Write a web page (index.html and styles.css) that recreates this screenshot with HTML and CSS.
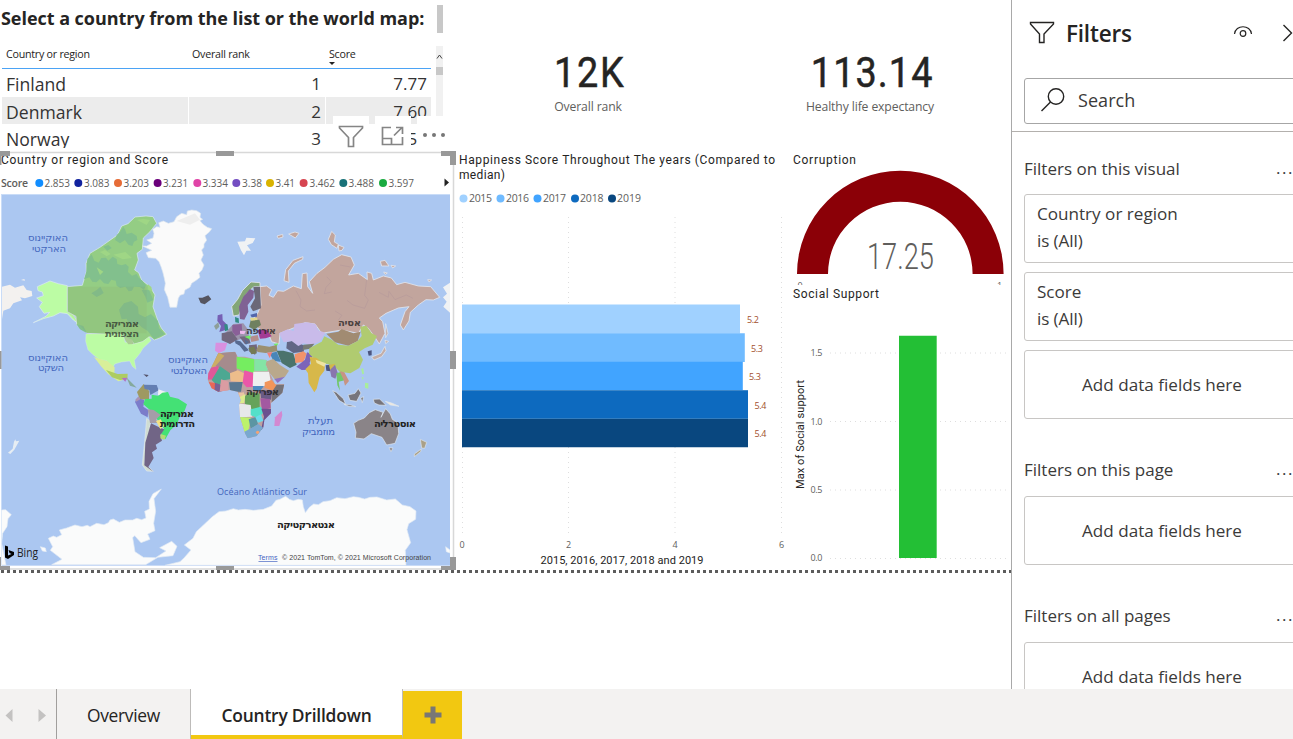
FILE: index.html
```html
<!DOCTYPE html>
<html lang="en">
<head>
<meta charset="utf-8">
<title>Country Drilldown</title>
<link rel="stylesheet" href="styles.css">
</head>
<body>
<div class="app">
<div class="workspace">
<main class="report">
  <section class="picker">
    <div class="picker-head"><h1>Select a country from the list or the world map:</h1><i class="head-thumb"></i></div>
    <div class="table-wrap">
      <div class="table">
        <div class="tr th"><span>Country or region</span><span>Overall rank</span><span class="sorted">Score</span></div>
        <div class="tr"><span>Finland</span><span>1</span><span>7.77</span></div>
        <div class="tr alt"><span>Denmark</span><span>2</span><span>7.60</span></div>
        <div class="tr"><span>Norway</span><span>3</span><span>7.55</span></div>
      </div>
      <div class="scroll"><svg width="7" height="21" viewBox="0 0 7 21"><path d="M1 12.5 3.5 9 6 12.5" fill="none" stroke="#444" stroke-width="1"/></svg><i></i></div>
    </div>
    <div class="visual-tools">
      <span><svg width="26" height="24" viewBox="0 0 26 24"><path d="M1.500 1.500H24.500V3L15.500 12.500V21.500H10.500V12.500L1.500 3Z"/></svg></span>
      <span><svg width="24" height="24" viewBox="0 0 24 24"><path d="M10 2.500H1.500V19.500H21.500V12M1.500 13.500H10.500V19.500M13 10.500 21 2.500M15 2.500H21.500V9"/></svg></span>
      <span><svg width="28" height="24" viewBox="0 0 28 24"><g class="dots"><circle cx="4" cy="10" r="2"/><circle cx="13" cy="10" r="2"/><circle cx="22" cy="10" r="2"/></g></svg></span>
    </div>
  </section>

  <section class="card"><b class="v1">12K</b><span>Overall rank</span></section>
  <section class="card card-b"><b class="v2">113.14</b><span>Healthy life expectancy</span></section>

  <section class="map">
  <svg width="456" height="420" viewBox="0 150 456 420">
    <path d="M0 152.500H453.500V569M0 569H455" stroke="#d8d8d8" fill="none" stroke-width="1.500"/>
    <text class="din" x="1" y="164" textLength="167">Country or region and Score</text>
    <text class="leg bold" x="1" y="187" textLength="27">Score</text>
    <g class="leg">
      <circle cx="39.300" cy="183" r="4" fill="#118dff"/><text x="44.500" y="187" textLength="25.500" lengthAdjust="spacingAndGlyphs">2.853</text>
      <circle cx="78.300" cy="183" r="4" fill="#12239e"/><text x="84" y="187" textLength="25.500" lengthAdjust="spacingAndGlyphs">3.083</text>
      <circle cx="118" cy="183" r="4" fill="#e66c37"/><text x="123.500" y="187" textLength="25.500" lengthAdjust="spacingAndGlyphs">3.203</text>
      <circle cx="157.600" cy="183" r="4" fill="#6b007b"/><text x="163" y="187" textLength="25" lengthAdjust="spacingAndGlyphs">3.231</text>
      <circle cx="197.300" cy="183" r="4" fill="#e044a7"/><text x="202.500" y="187" textLength="25.500" lengthAdjust="spacingAndGlyphs">3.334</text>
      <circle cx="236.300" cy="183" r="4" fill="#744ec2"/><text x="242" y="187" textLength="20" lengthAdjust="spacingAndGlyphs">3.38</text>
      <circle cx="270" cy="183" r="4" fill="#d9b300"/><text x="275.500" y="187" textLength="19.500" lengthAdjust="spacingAndGlyphs">3.41</text>
      <circle cx="303.600" cy="183" r="4" fill="#d64550"/><text x="309.500" y="187" textLength="25.500" lengthAdjust="spacingAndGlyphs">3.462</text>
      <circle cx="343.300" cy="183" r="4" fill="#197278"/><text x="348.500" y="187" textLength="25.500" lengthAdjust="spacingAndGlyphs">3.488</text>
      <circle cx="383" cy="183" r="4" fill="#1aab40"/><text x="388.500" y="187" textLength="25.500" lengthAdjust="spacingAndGlyphs">3.597</text>
    </g>
    <path d="M444.500 178.500 449 182.500 444.500 186.500Z" fill="#222"/>
    <clipPath id="frame"><rect x="1.500" y="195" width="448.500" height="370.500"/></clipPath>
    <clipPath id="africa"><path d="M-20 490 30 485 38 500 60 500 88 507 125 510 122 525 140 560 150 583 178 582 172 608 138 640 138 670 118 690 115 712 95 738 68 745 60 730 45 680 42 645 48 630 38 605 15 600 -20 605 -40 595 -52 570 -50 550 -35 520Z"/></clipPath>
    <rect x="1" y="194" width="449" height="371.500" fill="#c9dcf7"/>
    <g clip-path="url(#frame)">
    <rect x="2" y="195" width="448" height="371" fill="#abc7f1"/>
    <g transform="translate(0 190) scale(.33333)" stroke-linejoin="round">
      <path fill="#f3f1ef" d="M6 290 30 284 45 293 70 286 80 300 95 303 97 318 75 325 60 322 66 331 40 340 30 355 10 362 6 388ZM63 270 73 267 75 272Z"/>
      <g stroke="#dceaf5" stroke-width="2">
      <path fill="#bcfca4" d="M112 290 150 273 175 281 202 287V361L218 372 238 403 220 390 202 371 180 368 160 378 130 386 100 398 138 379 149 367 132 370 118 350 127 337 110 324 130 317 127 306 114 302Z"/>
      <path fill="#94cd84" d="M202 290 247 286 259 245 258 220 270 190 300 172 352 135 365 108 384 101 405 81 438 78 459 80 470 100 450 125 430 144 427 178 411 190 415 210 404 240 416 248 425 270 450 290 465 315 459 350 474 393 484 414 500 433 480 444 463 450 450 440 428 455 402 463 397 454 378 456 373 436 262 430 230 405 228 379 202 365Z"/>
      </g>
      <path fill="#82c08d" d="M259 245 262 207 275 193 283 212 296 218 304 204 318 203 325 212 338 200 350 207 352 222 365 226 377 222 386 230 384 246 396 257 410 252 415 262 428 273 438 286 432 300 420 291 402 290 396 302 386 304 376 290 361 294 350 287 347 272 334 269 325 282 312 280 300 267 289 277 277 275 268 262 252 268ZM350 135 360 126 370 110 376 120 380 132 395 128 410 138 412 150 402 155 397 168 385 164 375 150 360 160 345 150ZM320 240 335 232 342 246 330 256ZM310 170 325 165 335 174 322 182ZM357 359 372 340 394 333 414 350 416 372 435 382 453 372 474 393 477 415 494 432 463 448 443 423 425 412 410 397 398 404 385 398 380 386 365 388ZM229 402 250 408 261 430 240 418ZM290 300 301 290 311 309 303 314 290 321 274 310ZM425 300 447 299 460 330 442 338 436 320Z"/>
      <path fill="#8d8b5b" opacity=".1" d="M202 290H440V430H262L202 365Z"/>
      <path fill="#9fd685" d="M300 186 315 180 332 192 320 199ZM411 90 430 86 450 90 440 105ZM340 194 376 186 396 204 368 208ZM443 282 454 291 457 304 445 300ZM290 232 310 245 300 255Z"/>
      <path stroke="#e0f0e3" fill="#bcfca4" d="M258 432H370L375 457 397 457 397 463 428 455 447 440 453 452 429 475 420 490 403 511 408 538 397 529 389 513 364 516 344 522 339 533 320 512 299 509 278 493 264 479 257 454Z"/>
      <path fill="#aaca94" d="M371 438 397 449 401 462 385 463 376 451Z"/>
      <path fill="#d8ef99" d="M282 501 306 509 322 513 344 532 343 551 363 559 383 552 376 568 355 574 325 553 303 529Z"/>
      <path fill="#adcc62" d="M318 540 353 552 383 551 382 568 360 570 336 562Z"/>
      <path fill="#fafafa" stroke="#dde6ef" stroke-width="2" d="M427 168 440 168 455 160 440 150 459 144 462 130 458 118 470 110 480 112 476 98 490 93 505 100 522 95 530 80 545 70 560 74 562 63 575 60 590 62 602 70 600 82 608 88 600 92 609 103 622 112 635 116 628 126 615 137 620 151 612 162 612 172 605 180 610 195 603 210 612 225 606 240 597 250 600 262 590 270 575 280 570 292 555 300 552 312 540 316 535 325 530 352 510 352 506 335 503 322 493 299 496 280 492 261 488 245 483 230 477 215 467 205 445 203 438 188 455 181Z"/>
      <path fill="#eee" d="M530 93 585 70 600 89 570 104Z"/>
      <path fill="#555560" d="M595 323 607 323 625 316 634 328 614 343 602 339Z"/>
      <path fill="#7660b4" d="M653 376 667 372 668 391 682 405 683 418 658 426 663 408 652 393Z"/><path fill="#8d9f98" d="M642 408 655 397 658 410 648 420Z"/>
      <path fill="#d990df" d="M647 458 682 458 675 481 656 490 645 482Z"/>
      <path fill="#56546b" d="M430 553 446 555 440 561Z"/>
    </g>
    <g transform="translate(225 190) scale(.33333)">
      <path fill="#f0f2f4" d="M37 155 60 154 64 143 91 145 83 159 66 166 78 182 64 182 57 196 48 181ZM654 292 675 278V368L655 350 665 335 654 322 666 311Z"/>
      <g stroke="#e1e6ee" stroke-width="2.500" stroke-linejoin="round">
      <path fill="#83a676" d="M20 350 38 328 52 302 78 276 105 278 105 290 87 290 65 310 53 340 42 375 25 378Z"/>
      <path fill="#c2a59d" d="M105 290 125 288 140 299 132 316 145 322 158 302 176 304 205 288 229 296 232 251 246 249 248 290 263 310 253 275 276 250 300 232 325 208 350 194 378 201 388 225 371 255 400 250 427 269 426 246 440 250 445 270 475 258 499 264 515 284 540 277 580 288 617 290 644 322 625 330 603 329 580 345 556 367 552 393 535 420 526 405 540 365 552 350 520 354 483 370 463 384 473 395 480 430 463 462 452 445 430 415 415 405 400 430 350 420 290 430 270 402 240 398 205 414 165 430 162 462 140 455 130 430 100 415 80 395 98 370 108 345Z"/>
      <path fill="#c2a59d" d="M177 272 182 239 204 211 234 200 233 208 208 220 190 243 192 277ZM310 148 320 124 331 135 328 156 340 163 336 175 319 164ZM340 165 357 172 351 181 342 183ZM156 138 173 133 174 141 160 145ZM191 132 210 126 222 130 211 144ZM466 214 480 211 492 228 470 228ZM498 226 512 228 503 234ZM476 246 487 249 481 253ZM608 269 620 270 612 276Z"/>
      </g>
      <path stroke="#b3969a" fill="none" stroke-width="1.500" d="M213 302 228 330 225 349 245 363 270 360M305 260 319 275 303 292 298 311 320 306M345 225 376 231M425 269 419 316 430 330 419 355 384 345 366 331M462 307 490 322 492 304 510 329 544 315 564 325M340 390 351 376 330 363"/>
      <path fill="#806294" d="M45 387 42 350 55 320 75 297 87 303 85 323 68 345 70 365 58 389Z"/>
      <path fill="#6b6878" d="M85 290 105 290 108 355 84 364 76 350 90 325Z"/>
      <path fill="#9c94ac" d="M0 430 25 402 55 400 70 420 72 440 38 450 15 461 0 449Z"/><path fill="#8a6098" d="M22 405 50 402 52 430 32 438 22 425Z"/><path fill="#6f8060" d="M77 391 103 389 108 405 88 419 72 411Z"/>
      <path fill="#5266aa" d="M76 374 96 369 96 380 80 382Z"/><path fill="#e2d88e" d="M75 383 97 383 97 390 78 392Z"/><path fill="#328b82" d="M30 381 41 385 42 399 31 397ZM-2 403 7 403 10 420 0 424Z"/>
      <path fill="#a33b95" d="M98 420 125 419 140 439 122 445 105 446Z"/><path fill="#72677e" d="M-10 430 20 424 38 448 15 462-10 451ZM43 440 70 438 77 460 60 463ZM72 466 95 463 97 481 90 494 73 485Z"/><path fill="#747b54" d="M70 474 87 469 96 490 79 493Z"/><path fill="#b48d8a" d="M75 440 98 435 102 451 79 456Z"/><path fill="#73ed65" d="M58 440 78 436 74 448ZM146 462 160 460 154 471Z"/><path fill="#edb9ec" d="M45 422 62 423 58 433 45 431Z"/>
      <path fill="#576a91" d="M30 450 46 454 72 481 58 485 44 467 31 460ZM58 448 72 456 63 464Z"/>
      <path fill="#9b9070" d="M94 480 100 465 133 470 155 465 157 484 122 489 98 486Z"/>
      <path fill="#4986b8" d="M134 490 155 485 168 516 145 512Z"/><path fill="#f2807c" d="M126 488 142 486 134 504Z"/>
      <path fill="#4b736c" d="M155 482 175 482 205 490 215 524 195 534 170 519Z"/><path fill="#626685" d="M186 456 205 452 239 467 236 485 205 489 184 475Z"/>
      <path fill="#f2936b" d="M209 493 235 484 245 491 235 516 211 519Z"/><path fill="#7c64b8" d="M214 530 240 509 246 487 264 493 254 518 257 539 230 540Z"/>
      <path fill="#c9bbea" d="M162 430 188 418 206 423 208 402 245 397 272 402 279 421 301 428 284 455 260 465 235 460 220 468 200 453 176 457Z"/>
      <path fill="#777b74" d="M235 464 268 461 256 476 233 480Z"/>
      <path fill="#a18b72" d="M304 431 340 425 350 417 385 430 407 425 398 453 370 467 330 457Z"/>
      <path fill="#b0cb70" d="M253 475 290 455 298 439 320 449 340 464 370 467 398 453 410 438 406 410 424 407 440 430 456 438 443 464 419 475 402 486 414 509 403 534 376 550 344 545 325 526 286 518 266 504 252 491Z"/>
      <path fill="#d7b84a" d="M241 538 258 521 254 500 275 504 300 524 298 542 284 560 275 596 268 607 251 579 249 550Z"/>
      <path fill="#f0e4a1" d="M272 509 303 520 298 530 275 519Z"/><path fill="#4c557f" d="M302 526 316 524 316 544 304 542ZM428 484 440 481 440 496 431 497Z"/>
      <path fill="#d1b84a" d="M312 524 331 521 316 544Z"/><path fill="#8976ae" d="M315 540 330 524 338 548 331 566 319 560Z"/><path fill="#72c76b" d="M334 550 350 545 362 570 341 575 345 602 337 586Z"/><path fill="#c79483" d="M344 544 358 547 372 573 360 587 355 568Z"/>
      <path fill="#c3ada8" stroke="#e4edf5" stroke-width="2" d="M440 501 468 490 480 469 483 482 470 500 447 510ZM480 451 491 454 482 461ZM482 401 489 430 482 443Z"/>
      <path fill="#b9a88c" d="M119 516 145 507 165 525 192 542 180 560 151 570 132 547Z"/><path fill="#8d73c2" d="M148 567 180 560 158 579Z"/>
      <path fill="#a9ed9c" d="M408 536 415 535 417 551 412 553ZM410 560 416 563 413 570ZM420 578 430 580 430 596 420 593Z"/>
      <g clip-path="url(#africa)">
        <path fill="#bea1a1" d="M-60 480H190V750H-60Z"/>
        <path fill="#a58b8d" d="M-25 480H35V545L5 551-32 525Z"/><path fill="#ccae66" d="M-50 524-20 487-2 497-17 515-35 535Z"/><path fill="#df5999" d="M-58 536-20 528-18 570-58 568Z"/><path fill="#4ca892" d="M-15 529 15 550 15 568-5 571-20 590-40 570Z"/><path fill="#e86758" d="M-55 575-25 580-18 605-45 608Z"/><path fill="#786095" d="M-30 578-10 585-10 610-32 610Z"/><path fill="#db9ca2" d="M-12 568 10 575 10 610-16 605Z"/>
        <path fill="#75ed60" d="M35 500 88 507V550L60 545 35 535Z"/><path fill="#84e4a5" d="M88 507H128V544H88Z"/><path fill="#edbd8b" d="M15 550 38 541 58 550 54 576 17 574Z"/><path fill="#eb57a9" d="M58 541 84 548V590L65 592 53 578Z"/><path fill="#efeff0" d="M85 545H132L137 572 115 590 83 588Z"/>
        <path fill="#597891" d="M12 577 53 576 48 605 16 606Z"/><path fill="#eac4a3" d="M36 610 57 607 59 625 41 633Z"/><path fill="#f2955a" d="M119 577 139 570 160 592 143 602 119 593Z"/><path fill="#747278" d="M155 584H180V610L140 637 141 605Z"/><path fill="#4f8bc1" d="M84 588 117 588 106 602 84 603Z"/><path fill="#66a35b" d="M60 619 75 605 104 611V655L88 665 60 641Z"/><path fill="#6a5b87" d="M106 603 142 601 138 629 108 625Z"/><path fill="#a359a1" d="M106 625 135 627 137 655 111 661Z"/>
        <path fill="#e7e8ea" d="M38 640 77 645 82 680 43 682Z"/><path fill="#54e0c9" d="M77 658 107 650 118 665 99 684 77 676Z"/><path fill="#6b518f" d="M109 656 140 657V720H108L117 680Z"/><path fill="#bcf26b" d="M42 681 78 683 70 724 50 727Z"/><path fill="#5b95a3" d="M71 688 93 681 99 703 77 716Z"/><path fill="#6bdcec" d="M91 682 108 673 115 692 99 698Z"/><path fill="#79a8cf" d="M58 725 78 715 100 702 115 714 98 748 62 748Z"/><circle cx="98" cy="727" r="5" fill="#f5a373"/><path fill="#ddec8e" d="M38 625 61 612 58 640 43 640Z"/>
      </g>
      <path fill="#d388d1" d="M148 708 150 682 170 662 172 675 163 708Z"/>
    </g>
    <g transform="translate(0 370) scale(.33333)">
      <path fill="#e6edf3" d="M24 248 38 236 42 215 46 208 48 214 58 212 43 239 31 252Z"/>
      <path fill="#84a99c" d="M380 23 395 38 410 53 390 47Z"/><path fill="#b370c4" d="M365 24 382 23 376 35Z"/>
      <path fill="#d0ddd2" stroke="#e2e8ed" stroke-width="2" d="M440 145 452 155 443 220 433 280 460 304 440 303 427 285 435 205Z"/>
      <path fill="#9e9962" d="M411 66 431 42 448 64 447 88 420 89Z"/><path fill="#637eb2" d="M431 44 470 45 476 61 451 75 448 60 434 57Z"/><path fill="#eff1f3" d="M475 58 498 66 501 76 474 75Z"/>
      <path fill="#7b7cca" d="M405 96 412 83 433 91 430 110 445 120 443 142 423 131Z"/><path fill="#a994b5" d="M406 89 416 79 421 88 408 95Z"/>
      <path fill="#44e175" d="M430 103 435 87 455 86 455 74 475 77 487 68 504 66 510 80 535 86 561 103 554 122 540 138 531 163 511 181 496 208 482 194 492 176 469 145 449 119Z"/>
      <path fill="#a69da8" d="M443 118 461 120 482 135 469 147 472 159 450 159Z"/><path fill="#716586" d="M453 160 482 174 493 178 481 196 486 212 467 224 471 236 456 247 461 264 445 291 461 306 433 286 436 218Z"/><path fill="#f3e284" d="M468 153 482 148 493 168 481 177Z"/><path fill="#b4db73" d="M482 192 498 197 493 209 481 205Z"/>
      <g fill="#fafbfb" stroke="#e1eaf5" stroke-width="2"><path d="M5 420 17 419 34 434 24 446 21 470 8 490 5 520 18 585H0V420ZM121 530 136 534 139 545 127 543Z"/>
      <path d="M145 505 160 498 170 502 185 494 178 480 200 474 225 465 246 470 262 466 270 470 290 460 312 464 325 458 330 450 340 447 358 457 375 450 398 450 410 445 425 449 438 444 434 424 448 417 447 394 459 371 484 357 462 386 467 424 461 460 465 482 443 492 450 508 423 518 404 497 398 503 405 545 430 562 467 563 498 543 479 533 515 514 531 529 519 557 474 562 437 584H155L186 568 151 541 158 530Z"/>
      <path d="M495 586 540 575 552 564 573 540 553 525 579 505 589 485 637 440 657 425 678 423 700 416 715 420 735 418 760 421 790 418 815 408 828 391 840 388 857 379 868 388 880 392 895 388 907 390 910 410 916 428 928 412 941 402 955 404 969 395 990 392 1010 383 1035 386 1060 380 1075 382 1094 387 1110 382 1131 381 1160 390 1186 387 1207 405 1230 410 1248 423 1247 448 1226 461 1221 479 1232 518 1216 541 1218 586ZM1337 530 1350 540V549L1339 545Z"/></g>
    </g>
    <g transform="translate(225 370) scale(.33333)">
      <g fill="#77757c" stroke="#dfe7ee" stroke-width="2" stroke-linejoin="round"><path d="M323 62 334 67 355 86 362 103 342 91ZM357 103 378 105 392 110 372 109ZM369 75 390 70 400 56 408 69 395 94 375 91ZM407 84 416 80 412 98ZM445 88 464 87 483 106 462 105 448 99Z"/><path fill="#ece8df" d="M481 94 500 99 522 109 496 105Z"/>
      <path fill="#8a8488" d="M386 160 400 151 418 144 433 128 451 119 474 127 468 142 482 116 496 132 502 148 519 159 521 191 510 220 485 225 471 202 439 191 417 207 391 204 393 187ZM492 233 504 234 498 245Z"/><path fill="#aaa087" d="M586 208 605 217 599 235 590 234ZM589 237 587 245 568 260 568 252Z"/></g>
    </g>
    <g class="sea"><text x="28" y="241" textLength="40">האוקיינוס</text><text x="32" y="252" textLength="34">הארקטי</text><text x="28" y="361" textLength="40">האוקיינוס</text><text x="38" y="371" textLength="26">השקט</text><text x="168" y="363" textLength="40">האוקיינוס</text><text x="171" y="374" textLength="36">האטלנטי</text><text x="308" y="424" textLength="25">תעלת</text><text x="302" y="435" textLength="33">מוזמביק</text><text class="latin" x="217" y="495" textLength="90">Océano Atlántico Sur</text></g>
    <g class="land"><text x="105" y="327" textLength="34" opacity=".65">אמריקה</text><text x="105" y="337" textLength="34" opacity=".65">הצפונית</text><text x="160" y="417" textLength="34">אמריקה</text><text x="160" y="427" textLength="35">הדרומית</text><text x="246" y="334" textLength="30" opacity=".75">אירופה</text><text x="338" y="326" textLength="23" opacity=".75">אסיה</text><text x="246" y="395" textLength="33" opacity=".8">אפריקה</text><text x="374" y="427" textLength="42">אוסטרליה</text><text x="277" y="528" textLength="58">אנטארקטיקה</text></g>
    <path d="M5 545.500 8 546.500V555.500L11.500 554 9.500 553 8.500 550 14 552V555L8 559 5 557.500Z"/><text class="bing" x="17" y="556.500" textLength="21" lengthAdjust="spacingAndGlyphs">Bing</text>
    <text class="terms" x="258" y="560" textLength="19.500">Terms</text><path d="M258.500 561.500H277.500" stroke="#4665c3" stroke-width=".7"/><text class="copy" x="282" y="560" textLength="149">© 2021 TomTom, © 2021 Microsoft Corporation</text>
    </g>
    <path fill="#999" d="M0 151H10V156H1.500V165H0ZM216 151H234V156H216ZM441 151H456V165H450V156H441ZM450 351H456V369H450ZM0 351H1.500V369H0ZM0 557H1V566H10V570H0ZM216 566H234V570H216ZM441 566H450V557H456V570H441Z"/>
  </svg>
  </section>

  <section class="years">
  <svg width="336" height="420" viewBox="456 150 336 420">
    <text class="din" x="459" y="164" textLength="316">Happiness Score Throughout The years (Compared to</text><text class="din" x="459" y="179" textLength="46">median)</text>
    <g class="leg"><circle cx="463.500" cy="198.500" r="4" fill="#a0d1ff"/><text x="469" y="202" textLength="23">2015</text><circle cx="500.500" cy="198.500" r="4" fill="#70bbff"/><text x="506" y="202" textLength="23">2016</text><circle cx="537.500" cy="198.500" r="4" fill="#41a4ff"/><text x="543" y="202" textLength="23">2017</text><circle cx="575" cy="198.500" r="4" fill="#0d6abf"/><text x="580" y="202" textLength="23.500">2018</text><circle cx="612" cy="198.500" r="4" fill="#09477f"/><text x="617" y="202" textLength="24">2019</text></g>
    <path class="gridline" d="M462.500 217V535M568.500 217V535M675 217V535M781.500 217V535"/>
    <path fill="#a0d1ff" d="M462 304.500H740V333.500H462Z"/><path fill="#70bbff" d="M462 333.300H744.800V362H462Z"/><path fill="#41a4ff" d="M462 361.800H742.800V390.500H462Z"/><path fill="#0d6abf" d="M462 390.300H748V419H462Z"/><path fill="#09477f" d="M462 418.500H748V447.300H462Z"/><path d="M462 390.500H748M462 418.500H748" stroke="#3e86c6" stroke-width=".8"/>
    <g class="data"><text x="747" y="323" textLength="12">5.2</text><text x="751" y="352" textLength="12">5.3</text><text x="749" y="380" textLength="12">5.3</text><text x="754.500" y="409" textLength="12">5.4</text><text x="754.500" y="437" textLength="12">5.4</text></g>
    <g class="tick"><text x="459.500" y="548">0</text><text x="566" y="548">2</text><text x="672.500" y="548">4</text><text x="779" y="548">6</text></g>
    <text class="axis" x="540.500" y="564" textLength="163">2015, 2016, 2017, 2018 and 2019</text>
  </svg>
  </section>

  <section class="right">
  <svg width="219" height="135" viewBox="792 150 219 135">
    <text class="din" x="793" y="164" textLength="63">Corruption</text>
    <path fill="#8b0007" d="M797 274A103.300 103.300 0 0 1 1003.600 274H972.600A72.300 72.300 0 0 0 828 274Z"/>
    <text class="gauge" x="867" y="269" textLength="67" lengthAdjust="spacingAndGlyphs">17.25</text>
    <text class="tick" x="797.500" y="289">0</text><text class="tick" x="997" y="289">1</text>
  </svg>
  <svg width="219" height="285" viewBox="792 285 219 285">
    <text class="din" x="793" y="298" textLength="86">Social Support</text>
    <path class="gridline" d="M830 353H1007M830 421.500H1007M830 490H1007M830 558.500H1007"/>
    <path fill="#23bf35" d="M899 335.700H936.700V558H899Z"/>
    <g class="tick"><text x="810.500" y="356" textLength="12">1.5</text><text x="810.500" y="425" textLength="12">1.0</text><text x="810.500" y="493" textLength="12">0.5</text><text x="810.500" y="561" textLength="12">0.0</text></g>
    <text class="axis" transform="translate(804 489) rotate(-90)" textLength="109">Max of Social support</text>
  </svg>
  </section>
  <div class="page-edge"></div>
</main>

<aside class="filters">
  <header class="filters-head">
    <div class="title"><svg width="26" height="24" viewBox="0 0 26 24"><path d="M1.500 1.500H24.500V3L15 13V21.500H10.500V13L1.500 3Z"/></svg><h2>Filters</h2><svg class="eye" width="20" height="14" viewBox="0 0 20 14"><path d="M1.500 9C2.500-.7 17.500-.7 18.500 9"/><circle cx="10" cy="8.500" r="2.800"/></svg><svg class="chev" width="12" height="20" viewBox="0 0 12 20"><path d="M1.500 2 9.500 10 1.500 18"/></svg></div>
    <div class="search"><svg width="26" height="26" viewBox="0 0 26 26"><circle cx="16" cy="9.500" r="7.700"/><path d="M10.500 15 1.500 24"/></svg><span>Search</span></div>
  </header>
  <div class="group"><h3><span>Filters on this visual</span><i>...</i></h3>
    <div class="box"><p>Country or region</p><p class="is">is (All)</p></div>
    <div class="box"><p>Score</p><p class="is">is (All)</p></div>
    <div class="box drop">Add data fields here</div></div>
  <div class="group"><h3><span>Filters on this page</span><i>...</i></h3><div class="box drop">Add data fields here</div></div>
  <div class="group"><h3><span>Filters on all pages</span><i>...</i></h3><div class="box drop">Add data fields here</div></div>
</aside>
</div>
<nav class="tabs">
  <div class="arrows"><svg width="56" height="50" viewBox="0 0 56 50"><path fill="#c3c2c1" d="M12.500 20V33L5.500 26.500ZM38.500 20V33L46 26.500Z"/></svg></div>
  <div class="tab">Overview</div>
  <div class="tab active">Country Drilldown</div>
  <div class="plus"><svg width="18" height="18" viewBox="0 0 18 18"><path fill="#797775" d="M6.500 .5H11.500V6.500H17.500V11.500H11.500V17.500H6.500V11.500H.5V6.500H6.500Z"/></svg></div>
</nav>
</div>
</body>
</html>
```
FILE: styles.css
```css
* { box-sizing: border-box; }
body { margin: 0; background: #fff; color: #252423; font-family: "Open Sans", "Noto Sans", sans-serif; overflow: hidden; }
h1, h2, h3, p { margin: 0; }
svg { display: block; }
i { font-style: normal; }
.app { width: 1293px; height: 739px; display: flex; flex-direction: column; overflow: hidden; }
.workspace { height: 689px; display: flex; }

.report { width: 1011px; flex: none; display: grid; grid-template-columns: 456px 336px 219px; grid-template-rows: 150px 420px 3px; }
.picker { position: relative; overflow: hidden; }
.picker-head { height: 45px; display: flex; justify-content: space-between; padding: 5px 13px 0 1px; }
.picker-head h1 { font-size: 18px; line-height: 26px; font-weight: 700; letter-spacing: -.04px; white-space: nowrap; }
.head-thumb { width: 6px; height: 28px; background: #c8c8c8; }
.table-wrap { display: flex; height: 103px; overflow: hidden; }
.table { width: 434px; padding: 0 3px 0 2px; }
.tr { display: grid; grid-template-columns: 186px 137px 106px; height: 27.500px; font-size: 17px; line-height: 30px; color: #333; }
.tr span { text-align: right; padding-right: 4px; height: 27.500px; }
.tr span:first-child { text-align: left; padding-left: 4px; font-size: 17.600px; }
.tr span + span { border-left: 1px solid #fff; }
.th { height: 24px; font-size: 10.700px; line-height: 18px; letter-spacing: -.25px; border-bottom: 1px solid #4ba3f5; color: #252423; }
.th span, .th span:first-child { text-align: left; padding-left: 4px; height: 23px; font-size: 10.700px; }
.th span + span { padding-left: 3px; }
.alt span { background: #ececec; }
.sorted::after { content: ""; display: block; width: 0; border: 3px solid transparent; border-top-color: #222; border-bottom: 0; margin-top: -1px; }
.scroll { margin-left: 2px; width: 7px; height: 71px; margin-top: 1px; background: #f1f1f1; }
.scroll i { display: block; height: 8px; background: #c8c8c8; }
.visual-tools { position: absolute; left: 333px; top: 116px; display: flex; gap: 6px; }
.visual-tools span { width: 36px; height: 33px; background: #fff; display: flex; justify-content: center; align-items: flex-end; }
.visual-tools span:nth-child(2) { justify-content: flex-start; padding-left: 6px; }
.visual-tools span:nth-child(3) { justify-content: flex-start; padding-left: 4px; }
.visual-tools path { fill: none; stroke: #858585; stroke-width: 1.700; }
.dots { fill: #777; }

.card { padding-top: 46px; width: 264px; display: flex; flex-direction: column; align-items: center; }
.card-b { width: 156px; }
.card b { font: 400 42px/54px Roboto, sans-serif; letter-spacing: 2px; height: 52px; transform: scaleX(.9); margin-left: 4px; -webkit-text-stroke: .5px #252423; }
.card .v2 { letter-spacing: 1.200px; }
.card span { font-size: 12.200px; line-height: 17px; letter-spacing: -.12px; color: #605e5c; white-space: nowrap; }

.din { font: 12px Roboto, sans-serif; fill: #252423; }
.axis { font: 11px Roboto, sans-serif; fill: #252423; }
.leg { font: 10.500px "Open Sans", sans-serif; fill: #605e5c; }
.bold { font-weight: 600; }
.tick { font: 9px "Open Sans", sans-serif; fill: #605e5c; }
.data { font: 9px "Open Sans", sans-serif; fill: #a2502d; }
.gridline { fill: none; stroke: #dedede; stroke-width: 1; stroke-dasharray: 1 4; }
.gauge { font: 300 36px Roboto, sans-serif; fill: #605e5c; }
.sea { font: 10px "DejaVu Sans", sans-serif; fill: #4366bd; }
.latin { font: 500 9px "Open Sans", sans-serif; }
.land { font: bold 10px "DejaVu Sans", sans-serif; fill: #222; }
.bing { font: 12px "Open Sans", sans-serif; fill: #222; }
.terms, .copy { font: 7px "Liberation Sans", sans-serif; fill: #444; }
.terms { fill: #4665c3; }
.page-edge { grid-column: 1 / 4; background: repeating-linear-gradient(90deg, #fff 0 1px, #5c5c5c 1px 4px, #fff 4px 6px); }

.filters { width: 282px; border-left: 1px solid #a9a9a9; overflow: hidden; color: #3b3a39; }
.filters-head { height: 132px; border-bottom: 1px solid #b3b0ad; padding-left: 12px; }
.filters svg { fill: none; stroke: #252423; stroke-width: 1.400; flex: none; }
.title { display: flex; align-items: center; height: 78px; padding: 0 0 12px 5px; width: 281px; }
.title h2 { font-size: 22.500px; font-weight: 600; letter-spacing: -.2px; width: 167px; margin-left: 11px; color: #252423; }
.title .eye { stroke-width: 1.200; margin-bottom: 2px; }
.title .chev { margin-left: 29px; margin-bottom: 1px; }
.search { width: 281px; height: 46px; border: 1px solid #a6a6a6; border-radius: 3px; display: flex; align-items: center; gap: 12px; padding-left: 15px; font-size: 18px; padding-bottom: 2px; }
.search span { letter-spacing: .05px; }
.group { padding-left: 12px; width: 320px; }
.group h3 { display: flex; justify-content: space-between; width: 270px; height: 62px; padding-top: 26px; font-size: 17px; font-weight: 400; line-height: 22px; }
.group h3 i { letter-spacing: 1.500px; margin-top: -1px; }
.group + .group h3 { height: 68px; padding-top: 31px; }
.box { width: 300px; height: 69px; border: 1px solid #c8c6c4; border-radius: 3px; padding: 5px 12px; margin-bottom: 9px; font-size: 17.100px; line-height: 27px; }
.box.drop { width: 276px; display: flex; align-items: center; justify-content: center; padding: 0; }
.is { letter-spacing: -.1px; }

.tabs { height: 50px; background: #f3f2f1; display: flex; }
.arrows { width: 57px; border-right: 1px solid #a19f9d; }
.tab { width: 134px; border-right: 1px solid #bdbbb9; display: flex; align-items: center; justify-content: center; font-size: 17.400px; padding-top: 2px; letter-spacing: -.3px; }
.tab.active { width: 212px; background: #fff; border-bottom: 4px solid #f2c811; font-weight: 600; padding-top: 6px; letter-spacing: -.2px; }
.plus { width: 59px; margin-top: 2px; background: #f2c811; display: flex; align-items: center; justify-content: center; }
```
